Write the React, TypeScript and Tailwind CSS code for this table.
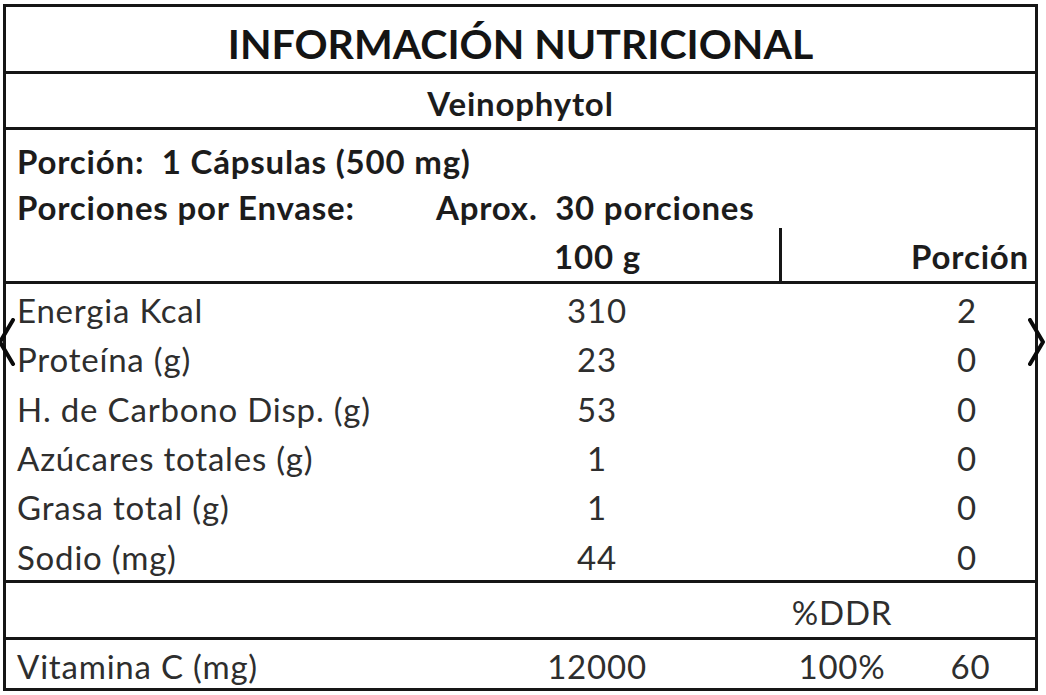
const rows = [
  { label: "Energia Kcal", per100: "310", portion: "2" },
  { label: "Proteína (g)", per100: "23", portion: "0" },
  { label: "H. de Carbono Disp. (g)", per100: "53", portion: "0" },
  { label: "Azúcares totales (g)", per100: "1", portion: "0" },
  { label: "Grasa total (g)", per100: "1", portion: "0" },
  { label: "Sodio (mg)", per100: "44", portion: "0" },
];

function Chevron({ side }: { side: "left" | "right" }) {
  const points = side === "left" ? "14,2 1,24 14,46" : "2,2 15,24 2,46";
  return (
    <svg
      width="17"
      height="48"
      viewBox="0 0 17 48"
      className={`absolute top-[318px] ${side === "left" ? "left-[-1px]" : "left-[1028px]"}`}
    >
      <polyline points={points} fill="none" stroke="#0a0a0a" strokeWidth="4" strokeLinecap="round" strokeLinejoin="round" />
    </svg>
  );
}

export default function App() {
  return (
    <div className="relative w-[1046px] h-[695px] bg-white overflow-hidden font-['Lato',sans-serif]">
      <div className="ml-[3px] mt-[4px] w-[1035px] border-[3px] border-[#161616] text-[#2e2e2e] tracking-[0.8px]">
        <div className="h-[67px] border-b-[3px] border-[#161616] flex items-center justify-center pt-[8px] text-[41px] font-bold text-[#141414] leading-none tracking-normal">
          INFORMACIÓN NUTRICIONAL
        </div>
        <div className="h-[56px] border-b-[3px] border-[#161616] flex items-center justify-center pt-[6px] text-[33px] font-bold text-[#1c1c1c] leading-none">
          Veinophytol
        </div>

        <div className="h-[154px] border-b-[3px] border-[#161616] pt-[6px] text-[33px] font-bold text-[#1c1c1c] leading-none">
          <div className="h-[50px] flex items-center pl-[11px] whitespace-pre">Porción:  1 Cápsulas (500 mg)</div>
          <div className="h-[42px] flex items-center">
            <div className="w-[430px] pl-[11px]">Porciones por Envase:</div>
            <div className="whitespace-pre">Aprox.  30 porciones</div>
          </div>
          <div className="h-[53px] flex">
            <div className="w-[410px]" />
            <div className="w-[366px] border-r-[3px] border-[#161616] flex items-end justify-center pb-[8px]">100 g</div>
            <div className="flex-1 flex items-end justify-end pb-[8px] pr-[6px]">Porción</div>
          </div>
        </div>

        <div className="h-[299px] border-b-[3px] border-[#161616] pt-[2px] text-[33px] leading-none">
          {rows.map((r) => (
            <div key={r.label} className="h-[49.3px] flex items-center">
              <div className="w-[410px] pl-[11px]">{r.label}</div>
              <div className="w-[362px] text-center">{r.per100}</div>
              <div className="flex-1 text-right pr-[58px]">{r.portion}</div>
            </div>
          ))}
        </div>

        <div className="h-[57px] border-b-[3px] border-[#161616] flex items-center pt-[4px] text-[33px] leading-none">
          <div className="w-[772px]" />
          <div className="w-[128px] text-center">%DDR</div>
        </div>

        <div className="h-[48px] flex items-center pt-[4px] text-[33px] leading-none">
          <div className="w-[410px] pl-[11px]">Vitamina C (mg)</div>
          <div className="w-[362px] text-center">12000</div>
          <div className="w-[128px] text-center">100%</div>
          <div className="flex-1 text-center">60</div>
        </div>
      </div>

      <Chevron side="left" />
      <Chevron side="right" />
    </div>
  );
}
